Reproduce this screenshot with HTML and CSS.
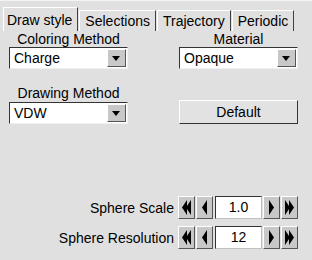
FILE: index.html
```html
<!DOCTYPE html>
<html lang="en">
<head>
    <meta charset="UTF-8">
    <title>Draw style</title>
    <link rel="stylesheet" href="styles.css">
</head>
<body>
    <div class="window">
        <ul class="tabs">
            <li class="tab active">Draw style</li>
            <li class="tab">Selections</li>
            <li class="tab">Trajectory</li>
            <li class="tab">Periodic</li>
        </ul>

        <div class="panel">
            <div class="grid">
                <div class="field">
                    <div class="label">Coloring Method</div>
                    <div class="combo"><span>Charge</span><span class="arrow"></span></div>
                </div>
                <div class="field">
                    <div class="label">Material</div>
                    <div class="combo"><span>Opaque</span><span class="arrow"></span></div>
                </div>
                <div class="field">
                    <div class="label">Drawing Method</div>
                    <div class="combo second"><span>VDW</span><span class="arrow"></span></div>
                </div>
                <div class="field bottom">
                    <div class="button">Default</div>
                </div>
            </div>

            <div class="spinners">
                <div class="spin-row">
                    <span class="spin-label">Sphere Scale</span>
                    <span class="spin-btn"><svg width="9" height="15" viewBox="0 0 9 15"><polygon points="0,7.5 5,0 5,15" /><polygon points="4,7.5 9,0 9,15" /></svg></span>
                    <span class="spin-btn"><svg width="5" height="15" viewBox="0 0 5 15"><polygon points="0,7.5 5,0 5,15" /></svg></span>
                    <span class="spin-field">1.0</span>
                    <span class="spin-btn"><svg width="5" height="15" viewBox="0 0 5 15"><polygon points="5,7.5 0,0 0,15" /></svg></span>
                    <span class="spin-btn"><svg width="9" height="15" viewBox="0 0 9 15"><polygon points="5,7.5 0,0 0,15" /><polygon points="9,7.5 4,0 4,15" /></svg></span>
                </div>
                <div class="spin-row">
                    <span class="spin-label">Sphere Resolution</span>
                    <span class="spin-btn"><svg width="9" height="15" viewBox="0 0 9 15"><polygon points="0,7.5 5,0 5,15" /><polygon points="4,7.5 9,0 9,15" /></svg></span>
                    <span class="spin-btn"><svg width="5" height="15" viewBox="0 0 5 15"><polygon points="0,7.5 5,0 5,15" /></svg></span>
                    <span class="spin-field">12</span>
                    <span class="spin-btn"><svg width="5" height="15" viewBox="0 0 5 15"><polygon points="5,7.5 0,0 0,15" /></svg></span>
                    <span class="spin-btn"><svg width="9" height="15" viewBox="0 0 9 15"><polygon points="5,7.5 0,0 0,15" /><polygon points="9,7.5 4,0 4,15" /></svg></span>
                </div>
            </div>
        </div>
    </div>
</body>
</html>
```

FILE: styles.css
```css
* {
    margin: 0;
    padding: 0;
    box-sizing: border-box;
}

body {
    font-family: "Liberation Sans", Arial, sans-serif;
    font-size: 14px;
    line-height: 16px;
    color: #000;
    background: #e0e0e0;
    width: 312px;
    height: 260px;
    overflow: hidden;
}

.window {
    padding-top: 2px;
    border-top: 1px solid #f4f4f4;
}

.tabs {
    list-style: none;
    display: flex;
    align-items: flex-end;
    padding-left: 3px;
    margin-top: 3px;
    height: 25px;
}

.tab {
    height: 21px;
    line-height: 20px;
    padding: 0 5px;
    border-top: 1px solid #fff;
    border-left: 1px solid #fff;
    border-right: 1px solid #404040;
    margin-right: 1px;
}

.tab.active {
    height: 24px;
    padding: 2px 5px 0 3px;
}

.panel {
    padding-top: 0;
}

.grid {
    display: grid;
    grid-template-columns: 119px 119px;
    column-gap: 51px;
    row-gap: 16px;
    padding-left: 9px;
}

.field {
    display: flex;
    flex-direction: column;
}

.field.bottom {
    justify-content: flex-end;
}

.label {
    text-align: center;
    height: 16px;
}

.combo {
    height: 22px;
    background: #fff;
    border: 1px solid;
    border-color: #333 #f0f0f0 #f0f0f0 #333;
    display: flex;
    align-items: center;
    justify-content: space-between;
    padding: 1px 1px 1px 4px;
}

.combo.second {
    margin-top: 1px;
}

.arrow {
    width: 19px;
    height: 18px;
    background: #c8c8c8;
    border: 1px solid;
    border-color: #fff #555 #555 #fff;
    position: relative;
}

.arrow::after {
    content: "";
    position: absolute;
    left: 4px;
    top: 6px;
    border-left: 4px solid transparent;
    border-right: 4px solid transparent;
    border-top: 5px solid #000;
}

.button {
    height: 24px;
    line-height: 22px;
    text-align: center;
    border: 1px solid;
    border-color: #fff #333 #333 #fff;
    background: #e2e2e2;
}

.spinners {
    margin-top: 72px;
    padding-right: 14px;
    display: flex;
    flex-direction: column;
    gap: 7px;
}

.spin-row {
    display: flex;
    justify-content: flex-end;
    align-items: center;
    height: 23px;
}

.spin-label {
    margin-right: 4px;
}

.spin-btn {
    width: 17px;
    height: 23px;
    background: #c8c8c8;
    border: 1px solid;
    border-color: #fff #555 #555 #fff;
    display: flex;
    align-items: center;
    justify-content: center;
    margin-right: 1px;
}

.spin-btn:last-child {
    margin-right: 0;
}

.spin-btn svg {
    fill: #000;
}

.spin-field {
    width: 47px;
    height: 23px;
    line-height: 21px;
    text-align: center;
    background: #fff;
    border: 1px solid;
    border-color: #333 #c0c0c0 #c0c0c0 #333;
    margin: 0 1px 0 1px;
}
```
